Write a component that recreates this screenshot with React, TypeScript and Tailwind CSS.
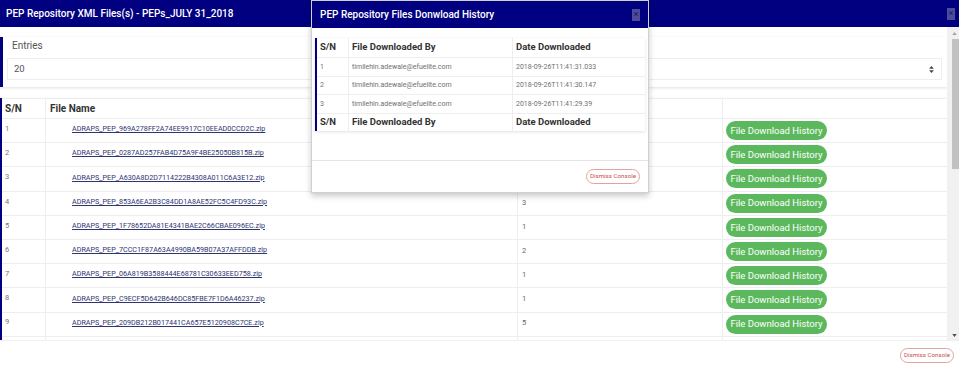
import type { ReactNode } from "react";

const files = [
  { name: "ADRAPS_PEP_969A278FF2A74EE9917C10EEAD0CCD2C.zip", count: 3 },
  { name: "ADRAPS_PEP_0287AD257FAB4D75A9F4BE25050B815B.zip", count: 2 },
  { name: "ADRAPS_PEP_A630A8D2D7114222B4308A011C6A3E12.zip", count: 1 },
  { name: "ADRAPS_PEP_853A6EA2B3C84DD1A8AE52FC5C4FD93C.zip", count: 3 },
  { name: "ADRAPS_PEP_1F78652DA81E4341BAE2C66CBAE096EC.zip", count: 1 },
  { name: "ADRAPS_PEP_7CCC1F87A63A4990BA59B07A37AFFDDB.zip", count: 2 },
  { name: "ADRAPS_PEP_06A819B3588444E68781C30633EED758.zip", count: 1 },
  { name: "ADRAPS_PEP_C9ECF5D642B646DC85FBE7F1D6A46237.zip", count: 1 },
  { name: "ADRAPS_PEP_209DB212B017441CA657E5120908C7CE.zip", count: 5 },
];

const history = [
  { by: "timilehin.adewale@efuelite.com", date: "2018-09-26T11:41:31.033" },
  { by: "timilehin.adewale@efuelite.com", date: "2018-09-26T11:41:30.147" },
  { by: "timilehin.adewale@efuelite.com", date: "2018-09-26T11:41:29.39" },
];

function CloseButton() {
  return (
    <button
      type="button"
      aria-label="Close"
      className="flex h-[12px] w-[8px] items-center justify-center bg-[#4c4c98] text-[9px] leading-none text-[#16166a]"
    >
      ×
    </button>
  );
}

function DismissButton() {
  return (
    <button
      type="button"
      className="flex h-[15px] items-center rounded-full border border-[#e2a3a0] px-[3px] text-[6.2px] leading-none text-[#c9504c]"
    >
      Dismiss Console
    </button>
  );
}

function HistoryButton() {
  return (
    <button
      type="button"
      className="flex h-[19px] w-[101px] items-center justify-center rounded-full bg-[#5cb85c] text-[9.5px] leading-none text-white"
    >
      File Download History
    </button>
  );
}

function Cell({ children, className = "" }: { children?: ReactNode; className?: string }) {
  return <div className={["flex border-r border-[#eeeeee]", className].join(" ")}>{children}</div>;
}

function HistoryModal() {
  const cols = "grid grid-cols-[32px_164px_133px]";
  return (
    <div className="absolute top-0 left-[311px] flex h-[193px] w-[338px] flex-col border border-[#d0d0d0] bg-white shadow-[0_3px_6px_rgba(0,0,0,0.22)]">
      <div className="flex h-[27px] shrink-0 items-center justify-between bg-[#000080] pr-[8px] pl-[8px]">
        <h2 className="text-[10px] font-medium text-white">PEP Repository Files Donwload History</h2>
        <CloseButton />
      </div>
      <div className="px-[3px] pt-[10px]">
        <div className="border-l-2 border-[#000080] shadow-[0_1px_3px_rgba(0,0,0,0.12)]">
          <div className={`${cols} h-[19px] text-[9.5px] font-bold text-[#333]`}>
            <Cell className="items-center pl-[3px]">S/N</Cell>
            <Cell className="items-center pl-[3px]">File Downloaded By</Cell>
            <div className="flex items-center pl-[3px]">Date Downloaded</div>
          </div>
          {history.map((h, i) => (
            <div key={i} className={`${cols} h-[18.5px] border-t border-[#eeeeee] text-[7px] text-[#707070]`}>
              <Cell className="items-center pl-[3px]">{i + 1}</Cell>
              <Cell className="items-center pl-[3px]">{h.by}</Cell>
              <div className="flex items-center pl-[3px]">{h.date}</div>
            </div>
          ))}
          <div className={`${cols} h-[18.5px] border-t border-[#eeeeee] text-[9.5px] font-bold text-[#333]`}>
            <Cell className="items-center pl-[3px]">S/N</Cell>
            <Cell className="items-center pl-[3px]">File Downloaded By</Cell>
            <div className="flex items-center pl-[3px]">Date Downloaded</div>
          </div>
        </div>
      </div>
      <div className="mt-auto flex h-[32px] items-center justify-end border-t border-[#e5e5e5] pr-[8px]">
        <DismissButton />
      </div>
    </div>
  );
}

function Scrollbar() {
  return (
    <div className="flex w-[12px] shrink-0 flex-col bg-[#f1f1f1]">
      <div className="flex h-[12px] items-center justify-center pl-[3px]">
        <svg viewBox="0 0 6 4" className="h-[3px] w-[5px]">
          <path d="M0 4 3 0 6 4Z" fill="#a3a3a3" />
        </svg>
      </div>
      <div className="ml-[5px] h-[130px] w-[7px] bg-[#c1c1c1]" />
      <div className="flex-1" />
      <div className="flex h-[10px] items-center justify-center pl-[3px]">
        <svg viewBox="0 0 6 4" className="h-[3px] w-[5px]">
          <path d="M0 0 3 4 6 0Z" fill="#505050" />
        </svg>
      </div>
    </div>
  );
}

export default function App() {
  const cols = "grid grid-cols-[44px_472px_205px_224px]";
  return (
    <div className="relative h-[370px] w-[959px] overflow-hidden bg-white font-['Roboto',sans-serif]">
      <header className="flex h-[27px] items-center justify-between bg-[#000080] pr-[4px] pl-[6px]">
        <h1 className="text-[10px] font-medium text-white">PEP Repository XML Files(s) - PEPs_JULY 31_2018</h1>
        <CloseButton />
      </header>

      <div className="flex h-[313px]">
        <main className="w-[947px] shrink-0 overflow-hidden pt-[10px]">
          <section className="flex h-[50px] flex-col border-l-[3px] border-[#000080] shadow-[0_1px_3px_rgba(0,0,0,0.12)]">
            <label className="pt-[1px] pl-[9px] text-[10px] text-[#555]">Entries</label>
            <div className="mt-[5px] mr-[5px] ml-[4px] flex h-[22px] items-center justify-between border border-[#eeeeee] pr-[7px] pl-[6px] text-[9.5px] text-[#555]">
              <span>20</span>
              <svg viewBox="0 0 6 9" className="h-[7px] w-[5px]">
                <path d="M0 3.5 3 0 6 3.5ZM0 5.5 3 9 6 5.5Z" fill="#444" />
              </svg>
            </div>
          </section>

          <section className="mt-[11px] border-l-2 border-[#000080] shadow-[0_1px_3px_rgba(0,0,0,0.1)]">
            <div className={`${cols} h-[20px] border-t border-[#eeeeee] text-[10px] font-bold text-[#333]`}>
              <Cell className="items-center pl-[3px]">S/N</Cell>
              <Cell className="items-center pl-[4px]">File Name</Cell>
              <Cell />
              <div />
            </div>
            {files.map((f, i) => (
              <div key={f.name} className={`${cols} h-[24.2px] border-t border-[#eeeeee]`}>
                <Cell className="items-center pl-[3px] text-[7.5px] text-[#777]">
                  <span className="-mt-[4px]">{i + 1}</span>
                </Cell>
                <Cell className="items-center pl-[26px]">
                  <a href="#" className="-mt-[2px] text-[7.2px] text-[#2f3570] underline">
                    {f.name}
                  </a>
                </Cell>
                <Cell className="items-center pl-[4px] text-[7.5px] text-[#666]">
                  <span className="-mt-[2px]">{f.count}</span>
                </Cell>
                <div className="flex items-center pl-[3px]">
                  <HistoryButton />
                </div>
              </div>
            ))}
            <div className={`${cols} h-[24.2px] border-t border-[#eeeeee]`}>
              <Cell />
              <Cell />
              <Cell />
              <div className="flex items-start pt-[3px] pl-[3px]">
                <HistoryButton />
              </div>
            </div>
          </section>
        </main>
        <Scrollbar />
      </div>

      <footer className="flex h-[30px] items-center justify-end border-t border-[#f0f0f0] pr-[5px]">
        <DismissButton />
      </footer>

      <HistoryModal />
    </div>
  );
}
